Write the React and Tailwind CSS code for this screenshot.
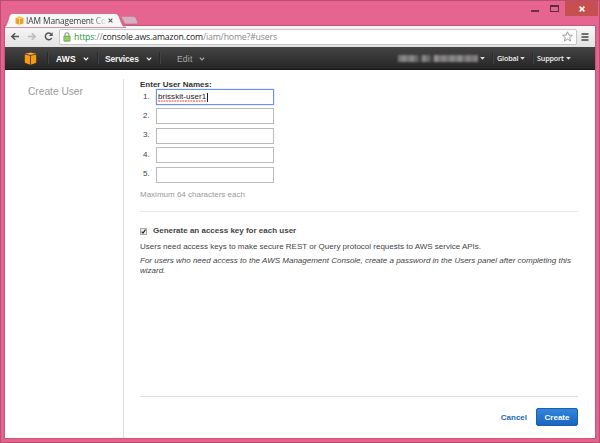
import React from "react";

const Chevron = ({ className = "" }) => (
  <svg className={className} width="6" height="4" viewBox="0 0 6 4" fill="none" stroke="currentColor" strokeWidth="1.2">
    <path d="M0.8 0.7 L3 2.9 L5.2 0.7" />
  </svg>
);

const Caret = () => (
  <svg width="5" height="3" viewBox="0 0 5 3" fill="#ddd">
    <path d="M0.1 0 H4.9 L2.5 2.8 Z" />
  </svg>
);

const Cube = ({ size, dark, light }) => (
  <svg width={size} height={size} viewBox="0 0 13 13" className="shrink-0">
    <path d="M0.8 2.6 L6.1 3.8 V12.7 L0.8 10.8 Z" fill={dark} />
    <path d="M12.2 2.6 L6.9 3.8 V12.7 L12.2 10.8 Z" fill={dark} />
    <path d="M1 1.8 L6.5 0.5 L12 1.8 L6.5 3.1 Z" fill={light} />
  </svg>
);

const Divider = () => <div className="h-3 w-px shrink-0 bg-[#2a2a2a] shadow-[1px_0_0_#424242]" />;

const redacted = [
  "#77777a", "#8c8987", "#767579", "#8a8886", "#6c6b70", "#454545", "#8a8883", "#6d6c74", "#444444", "#96928c",
  "#77767d", "#88857f", "#747078", "#8b8985", "#77767a", "#908c88", "#6c6b72", "#87847f", "#77757c", "#85827e",
];

function TitleBar() {
  return (
    <div className="flex h-[25px] shrink-0 items-start justify-between">
      <div className="relative mt-3 h-[14px] w-[138px]">
        <svg className="absolute -left-px top-0" width="138" height="15" viewBox="0 0 138 15">
          <path d="M0 14.5 C2 13.5 3 11 4.5 6 C5.5 2 6.5 0.5 9 0.5 H111 C114 0.5 115 3 116 6 C117.5 11 119 14 122 14.5 Z" fill="#f8f7f7" stroke="#ba4d70" strokeWidth="0.6" />
          <path d="M118 3.3 H129 Q131 3.3 132 5 L134 10 Q134 11 132 11 H122 Q120.5 11 120 9.5 L117.5 4.4 Q117 3.3 118 3.3 Z" fill="#d8afc1" stroke="#bd6283" strokeWidth="0.6" />
        </svg>
        <div className="relative flex h-[14px] items-center pl-[10px]">
          <Cube size={9} dark="#eda31b" light="#f8c453" />
          <div className="ml-[2px] w-[80px] whitespace-nowrap bg-linear-to-r from-[#333] from-82% to-[#eee] bg-clip-text font-['Open_Sans',sans-serif] text-[8.4px] leading-[13px] tracking-[-0.1px] text-transparent">IAM Management Co</div>
          <svg className="ml-[2px]" width="5" height="5" viewBox="0 0 5 5" stroke="#555" strokeWidth="1.1">
            <path d="M0.6 0.6 L4.4 4.4 M4.4 0.6 L0.6 4.4" />
          </svg>
        </div>
      </div>
      <div className="-mr-[3px] flex">
        <svg width="36" height="15" viewBox="0 0 36 15" fill="none">
          <path d="M2 10 H10" stroke="#5a2d3d" strokeWidth="1.8" />
          <rect x="21.5" y="4.5" width="8" height="6" stroke="#5a2d3d" />
          <path d="M21 5 H30" stroke="#5a2d3d" strokeWidth="2" />
        </svg>
        <div className="flex h-[15px] w-[33px] items-center justify-center bg-[#c74f50]">
          <svg width="6" height="6" viewBox="0 0 6 6" stroke="white" strokeWidth="1.5">
            <path d="M0.6 0.6 L5.4 5.4 M5.4 0.6 L0.6 5.4" />
          </svg>
        </div>
      </div>
    </div>
  );
}

function Toolbar() {
  return (
    <div className="flex h-[21px] shrink-0 items-center bg-linear-to-b from-[#f8f7f7] to-[#e2e2e2]">
      <svg width="54" height="21" viewBox="0 0 54 21" fill="none" strokeWidth="1.5" className="shrink-0">
        <path d="M14 10.5 H7 M10.2 7.2 L6.8 10.5 L10.2 13.8" stroke="#555" />
        <path d="M23 10.5 H30 M26.8 7.2 L30.2 10.5 L26.8 13.8" stroke="#bbb" />
        <path d="M46.4 8.2 A3.4 3.4 0 1 0 46.8 12" stroke="#555" />
        <path d="M47.7 6.2 V10 H43.8 Z" fill="#555" />
      </svg>
      <div className="flex h-[16px] w-[518px] shrink-0 items-center rounded-[2px] border border-[#c5c5c5] bg-white pl-[3px] pr-[3px]">
        <svg width="8" height="10" viewBox="0 0 8 10" className="shrink-0">
          <path d="M2 4.5 V2.8 A2 2 0 0 1 6 2.8 V4.5" fill="none" stroke="#8b9b86" strokeWidth="1.1" />
          <rect x="0.8" y="4" width="6.4" height="5.3" rx="0.6" fill="#83c65c" stroke="#58a144" strokeWidth="0.6" />
          <path d="M1.4 5.8 H6.6 M1.4 7.5 H6.6" stroke="#abdc8e" strokeWidth="0.6" />
        </svg>
        <div className="ml-[3px] flex-1 whitespace-nowrap pt-px font-['Open_Sans',sans-serif] text-[8.7px] leading-[13px] tracking-[-0.14px] text-[#888]">
          <span className="text-[#239a35]">https</span>://<span className="text-[#222]">console.aws.amazon.com</span>/iam/home?#users
        </div>
        <svg width="11" height="11" viewBox="0 0 11 11" fill="none" stroke="#888" strokeWidth="0.8">
          <path d="M5.5 0.8 L6.9 4.1 L10.4 4.3 L7.7 6.6 L8.6 10 L5.5 8.1 L2.4 10 L3.3 6.6 L0.6 4.3 L4.1 4.1 Z" />
        </svg>
      </div>
      <svg className="ml-[4px]" width="8" height="8" viewBox="0 0 8 8" stroke="#444" strokeWidth="1.3">
        <path d="M0.5 1 H7.5 M0.5 4 H7.5 M0.5 7 H7.5" />
      </svg>
    </div>
  );
}

function ConsoleNav() {
  return (
    <div className="flex h-[23px] shrink-0 items-center border-b border-[#171717] bg-linear-to-b from-[#454545] to-[#252525] text-[8.5px] font-bold leading-3 text-[#f3f3f3]">
      <div className="flex w-[42px] shrink-0 pl-[19px]"><Cube size={13} dark="#f79a10" light="#ffa92a" /></div>
      <Divider />
      <div className="flex w-[49px] shrink-0 items-center pl-[8px] pt-px text-white"><span className="w-[20px] tracking-[0.1px]">AWS</span><Chevron className="ml-[7px]" /></div>
      <Divider />
      <div className="flex w-[61px] shrink-0 items-center pl-[7px] pt-px"><span className="w-[34px] tracking-[-0.15px]">Services</span><Chevron className="ml-[7px]" /></div>
      <Divider />
      <div className="flex w-[60px] shrink-0 items-center pl-[17px] pt-px text-[#aaa]"><span className="w-[16px] font-normal tracking-[0.2px]">Edit</span><Chevron className="ml-[6px]" /></div>
      <div className="flex flex-1 items-center justify-end font-['Open_Sans',sans-serif] text-[7.2px] font-semibold tracking-[-0.15px]">
        <div className="mr-[2px] flex h-[7px] w-[80px] blur-[1px]">
          {redacted.map((color, i) => (
            <span key={i} className="h-full w-1" style={{ backgroundColor: color }} />
          ))}
        </div>
        <Caret />
        <div className="ml-[7px]"><Divider /></div>
        <span className="ml-[4px] w-[23px]">Global</span><Caret />
        <div className="ml-[7px]"><Divider /></div>
        <span className="ml-[4px] w-[29px]">Support</span><Caret />
        <div className="w-[24px]" />
      </div>
    </div>
  );
}

function UserForm() {
  const names = ["brisskit-user1", "", "", "", ""];
  return (
    <div className="flex flex-1 flex-col pl-[16px] pr-[17px] pt-[9px] text-[8px] leading-[11px] text-[#444]">
      <div className="h-[10px] font-bold text-[#333]">Enter User Names:</div>
      <div className="flex flex-col gap-[3.4px]">
        {names.map((name, i) => (
          <div key={i} className="flex h-4 items-center">
            <span className="w-[16px] pb-[2px] pl-[3px]">{i + 1}.</span>
            <div className={`flex h-4 w-[118px] items-center border pl-px ${i === 0 ? "border-[#6994e4] shadow-[0_0_1px_#6994e4]" : "border-[#bbb]"}`}>
              {name && (
                <>
                  <span className="flex w-[49px] flex-col text-[#222]">
                    <span className="h-[9px] whitespace-nowrap leading-[9px] tracking-[0.05px]">{name}</span>
                    <svg className="-mt-px" width="48" height="2" viewBox="0 0 48 2" fill="none" stroke="#ee3a3a" strokeWidth="1">
                      <path d="M0 1 H48" strokeDasharray="2 0.7" />
                    </svg>
                  </span>
                  <span className="h-[9px] w-px bg-[#222]" />
                </>
              )}
            </div>
          </div>
        ))}
      </div>
      <div className="mt-[6px] text-[#999]">Maximum 64 characters each</div>
      <div className="mt-[11px] h-px bg-[#e8e8e8]" />
      <div className="mt-[13px] flex h-[11px] items-center">
        <div className="mt-[3px] flex h-[7px] w-[7px] items-center justify-center border border-[#aaa] bg-[#eee]">
          <svg width="5" height="5" viewBox="0 0 5 5" fill="none" stroke="#222" strokeWidth="1.2" className="shrink-0">
            <path d="M0.6 2.6 L2 4 L4.5 0.6" />
          </svg>
        </div>
        <span className="ml-[6px] font-bold">Generate an access key for each user</span>
      </div>
      <div className="mt-[5px] whitespace-nowrap">Users need access keys to make secure REST or Query protocol requests to AWS service APIs.</div>
      <div className="mt-[4px] whitespace-nowrap italic leading-[10.5px]">
        For users who need access to the AWS Management Console, create a password in the Users panel after completing this<br />wizard.
      </div>
      <div className="flex-1" />
      <div className="h-px shrink-0 bg-[#ddd]" />
      <div className="flex h-[41px] shrink-0 items-start justify-end pt-[11px] font-bold">
        <span className="mr-[9px] pt-[4px] text-[#1b69b6]">Cancel</span>
        <div className="flex h-[18px] w-[42px] items-center justify-center rounded-[2px] border border-[#1b5fae] bg-linear-to-b from-[#3286dc] to-[#1766c0] text-white">Create</div>
      </div>
    </div>
  );
}

export default function App() {
  return (
    <div className="flex h-[443px] w-[600px] flex-col overflow-hidden border border-[#ba4d70] bg-[#e66590] px-[4px] pb-[4px] font-['Liberation_Sans',Arial,sans-serif]">
      <TitleBar />
      <div className="flex min-h-0 flex-1 flex-col bg-white shadow-[0_0_1px_1px_#c9557a]">
        <Toolbar />
        <ConsoleNav />
        <div className="flex min-h-0 flex-1">
          <div className="w-[118px] shrink-0 pl-[23px] pt-[15px] text-[10.2px] leading-[13px] text-[#999]">Create User</div>
          <div className="mt-[9px] w-px bg-[#ddd]" />
          <UserForm />
        </div>
      </div>
    </div>
  );
}
